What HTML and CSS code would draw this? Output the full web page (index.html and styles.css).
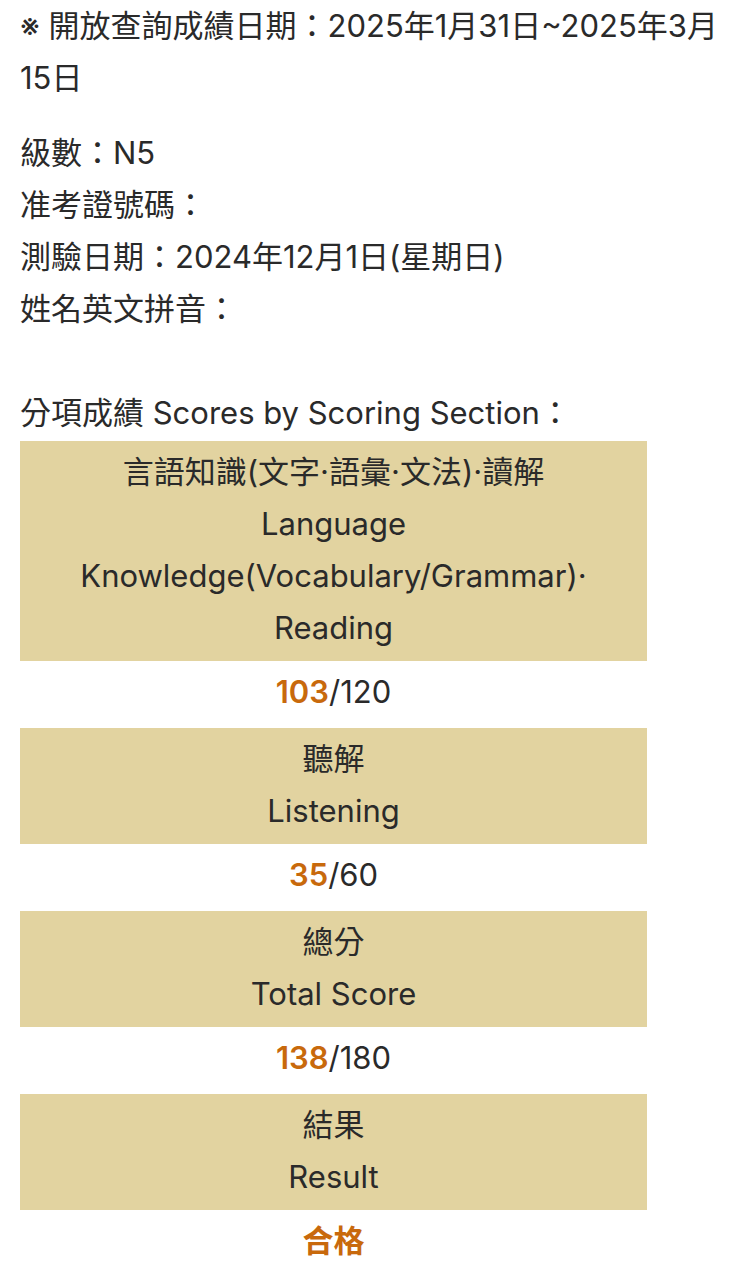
FILE: index.html
```html
<!DOCTYPE html>
<html lang="zh-Hant">
<head>
<meta charset="utf-8">
<title>成績查詢</title>
<link rel="stylesheet" href="styles.css">
</head>
<body>
<div class="page">
  <p class="notice">※ 開放查詢成績日期：2025年1月31日~2025年3月15日</p>
  <div class="info">
    <div class="line">級數：N5</div>
    <div class="line">准考證號碼：</div>
    <div class="line">測驗日期：2024年12月1日(星期日)</div>
    <div class="line">姓名英文拼音：</div>
    <div class="line blank"></div>
    <div class="line">分項成績 Scores by Scoring Section：</div>
  </div>
  <div class="scores">
    <div class="head">言語知識(文字·語彙·文法)·讀解<br>Language<br>Knowledge(Vocabulary/Grammar)·<br>Reading</div>
    <div class="score"><span class="got">103</span>/120</div>
    <div class="head">聽解<br>Listening</div>
    <div class="score"><span class="got">35</span>/60</div>
    <div class="head">總分<br>Total Score</div>
    <div class="score"><span class="got">138</span>/180</div>
    <div class="head">結果<br>Result</div>
    <div class="score result">合格</div>
  </div>
</div>
</body>
</html>
```
FILE: styles.css
```css
html, body {
  margin: 0;
  padding: 0;
  background: #ffffff;
}
body {
  font-family: Inter, "Noto Sans CJK TC", sans-serif;
  font-size: 31px;
  line-height: 52px;
  color: #2a2a2a;
}
.page {
  padding: 0 0 0 20px;
}
.notice {
  margin: 0 0 23px 0;
  width: 705px;
}
.line {
  height: 52px;
  white-space: nowrap;
}
.scores {
  display: flex;
  flex-direction: column;
  gap: 2px;
  width: 627px;
  margin-top: 2px;
  text-align: center;
}
.head {
  background: #e2d3a0;
  padding: 5px 0 7px;
}
.score {
  padding: 3px 0 8px;
}
.got {
  color: #c8690c;
  font-weight: 600;
}
.result {
  color: #c8690c;
  font-weight: 700;
}
```
